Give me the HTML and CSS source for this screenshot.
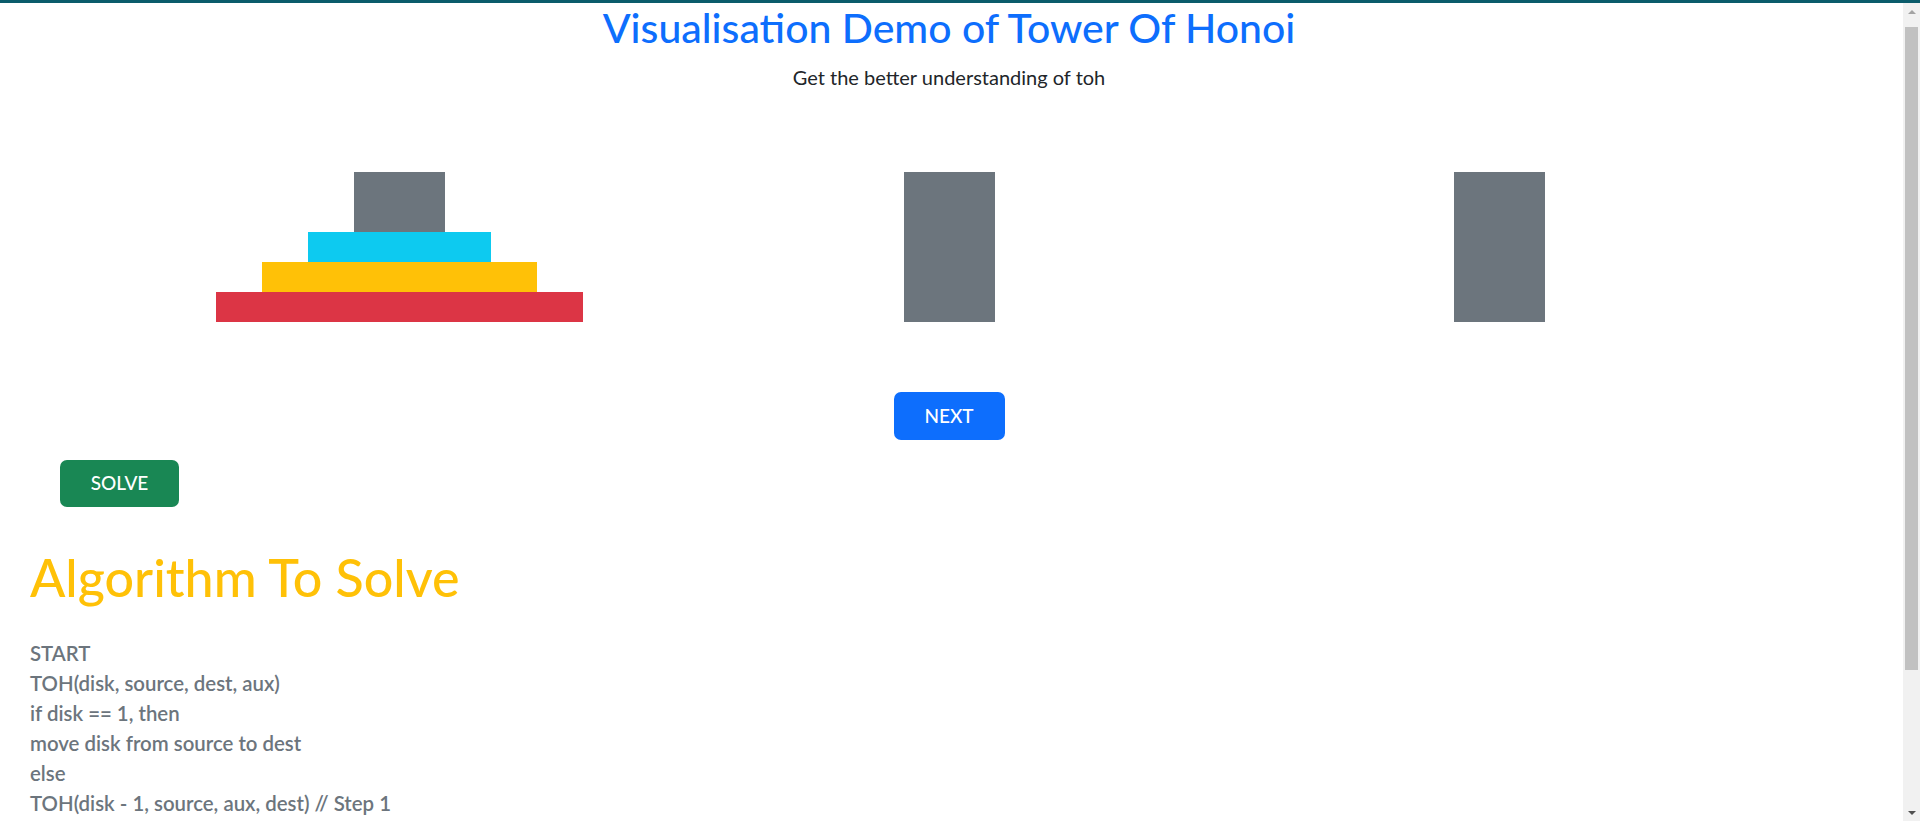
FILE: index.html
```html
<!DOCTYPE html>
<html lang="en">
<head>
<meta charset="utf-8">
<title>Tower Of Honoi</title>
<link rel="stylesheet" href="styles.css">
</head>
<body>
<div class="topbar"></div>
<main class="page">
  <header class="header">
    <h1 class="title">Visualisation Demo of Tower Of Honoi</h1>
    <p class="lead">Get the better understanding of toh</p>
  </header>

  <section class="towers">
    <div class="tower-col">
      <div class="tower">
        <div class="rod"></div>
        <div class="disk disk-info disk-2"></div>
        <div class="disk disk-warning disk-3"></div>
        <div class="disk disk-danger disk-4"></div>
      </div>
    </div>
    <div class="tower-col">
      <div class="tower">
        <div class="rod"></div>
      </div>
    </div>
    <div class="tower-col">
      <div class="tower">
        <div class="rod"></div>
      </div>
    </div>
  </section>

  <div class="next-row">
    <button class="btn btn-primary btn-next">NEXT</button>
  </div>

  <div class="solve-row">
    <button class="btn btn-success btn-solve">SOLVE</button>
  </div>

  <section class="algo">
    <h2 class="algo-title">Algorithm To Solve</h2>
    <div class="algo-code">
      <div>START</div>
      <div>TOH(disk, source, dest, aux)</div>
      <div>if disk == 1, then</div>
      <div>move disk from source to dest</div>
      <div>else</div>
      <div>TOH(disk - 1, source, aux, dest) // Step 1</div>
      <div>move disk from source to dest // Step 2</div>
      <div>TOH(disk - 1, aux, dest, source) // Step 3</div>
      <div>end if</div>
      <div>END</div>
    </div>
  </section>
</main>

<div class="scrollbar" aria-hidden="true">
  <div class="sb-arrow sb-up"></div>
  <div class="sb-track">
    <div class="sb-thumb"></div>
  </div>
  <div class="sb-arrow sb-down"></div>
</div>
</body>
</html>
```

FILE: styles.css
```css
html, body {
  margin: 0;
  padding: 0;
  background: #ffffff;
}

html {
  scrollbar-width: none;
}

body {
  font-family: Lato, "Open Sans", "Liberation Sans", sans-serif;
  color: #212529;
}

.topbar {
  height: 3px;
  background: #0b5c6b;
}

.page {
  padding-right: 22px;
  padding-bottom: 640px;
}

.header {
  text-align: center;
}

.title {
  margin: 0;
  font-size: 41px;
  font-weight: 500;
  line-height: 1.2;
  color: #0d6efd;
}

.lead {
  margin: 11px 0 0;
  font-size: 20px;
  line-height: 29px;
  color: #212529;
}

.towers {
  display: flex;
  justify-content: center;
  margin-top: 80px;
}

.tower-col {
  width: 550px;
  display: flex;
  justify-content: center;
}

.tower {
  height: 150px;
  display: flex;
  flex-direction: column;
  align-items: center;
}

.rod {
  flex: 1;
  width: 91px;
  background: #6c757d;
}

.disk {
  height: 30px;
  flex: none;
}

.disk-2 { width: 183px; }
.disk-3 { width: 275px; }
.disk-4 { width: 367px; }

.disk-info { background: #0dcaf0; }
.disk-warning { background: #ffc107; }
.disk-danger { background: #dc3545; }

.next-row {
  display: flex;
  justify-content: center;
  margin-top: 70px;
}

.btn {
  border: none;
  border-radius: 7px;
  color: #ffffff;
  font-family: Lato, "Open Sans", "Liberation Sans", sans-serif;
  font-size: 19px;
  font-weight: 500;
  line-height: 24px;
  padding: 12px 0;
  cursor: pointer;
}

.btn-primary { background: #0d6efd; }
.btn-success { background: #198754; padding: 11px 0 12px; }

.btn-next { width: 111px; }
.btn-solve { width: 119px; }

.solve-row {
  margin-top: 20px;
  padding-left: 60px;
}

.algo {
  padding-left: 30px;
}

.algo-title {
  margin: 39px 0 0;
  font-size: 52px;
  font-weight: 500;
  line-height: 1.2;
  color: #ffc107;
}

.algo-code {
  margin-top: 29px;
  font-size: 20.4px;
  font-weight: 600;
  line-height: 30px;
  color: #6c757d;
}

/* static picture of the window's scrollbar */
.scrollbar {
  position: fixed;
  top: 3px;
  right: 0;
  bottom: 0;
  width: 17px;
  background: #f1f1f1;
  display: flex;
  flex-direction: column;
}

.sb-arrow {
  height: 17px;
  flex: none;
  display: flex;
  align-items: center;
  justify-content: center;
}

.sb-arrow::before {
  content: "";
  width: 0;
  height: 0;
  border-left: 4px solid transparent;
  border-right: 4px solid transparent;
}

.sb-up::before {
  border-bottom: 4px solid #a3a3a3;
}

.sb-down::before {
  border-top: 4px solid #505050;
}

.sb-track {
  flex: 1;
  padding: 7px 2px 0;
}

.sb-thumb {
  height: 643px;
  background: #c1c1c1;
}
```
